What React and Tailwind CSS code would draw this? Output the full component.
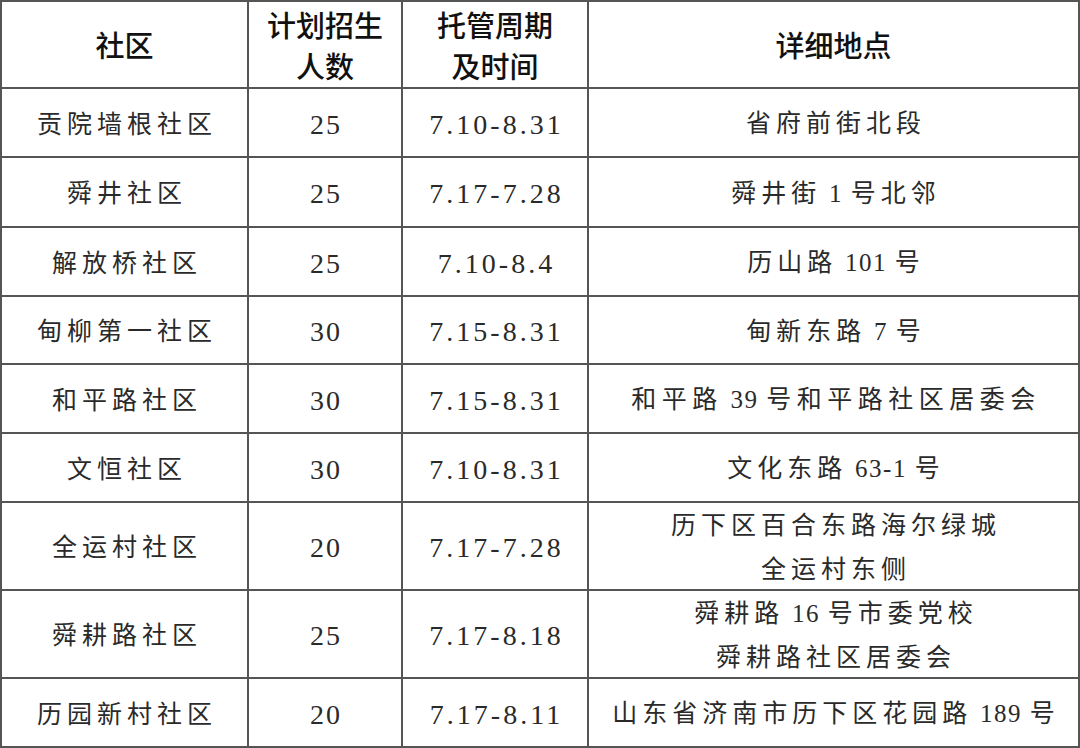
import React from "react";

const rows = [
  { name: "贡院墙根社区", count: "25", period: "7.10-8.31", place: ["省府前街北段"], h: "h-[69px]" },
  { name: "舜井社区", count: "25", period: "7.17-7.28", place: ["舜井街 1 号北邻"], h: "h-[70px]" },
  { name: "解放桥社区", count: "25", period: "7.10-8.4", place: ["历山路 101 号"], h: "h-[69px]" },
  { name: "甸柳第一社区", count: "30", period: "7.15-8.31", place: ["甸新东路 7 号"], h: "h-[68px]" },
  { name: "和平路社区", count: "30", period: "7.15-8.31", place: ["和平路 39 号和平路社区居委会"], h: "h-[69px]", wide: true },
  { name: "文恒社区", count: "30", period: "7.10-8.31", place: ["文化东路 63-1 号"], h: "h-[69px]" },
  { name: "全运村社区", count: "20", period: "7.17-7.28", place: ["历下区百合东路海尔绿城", "全运村东侧"], h: "h-[88px]" },
  { name: "舜耕路社区", count: "25", period: "7.17-8.18", place: ["舜耕路 16 号市委党校", "舜耕路社区居委会"], h: "h-[88px]" },
  { name: "历园新村社区", count: "20", period: "7.17-8.11", place: ["山东省济南市历下区花园路 189 号"], h: "h-[69px]" },
];

const bodyFont = "font-[Liberation_Serif,Noto_Sans_CJK_SC,serif] text-[#2a2a2a]";
const headFont = "font-[Noto_Sans_CJK_SC,sans-serif] text-[29px] text-[#111] font-medium leading-[41px]";

const Cell = ({ children, className = "" }) => (
  <div className={`flex flex-col items-center justify-center text-center border-r-2 border-b-2 border-[#555] ${className}`}>
    {children}
  </div>
);

// numbers inside addresses sit tighter than the Chinese characters
const Address = ({ text }) => (
  <span>
    {text.split(/([0-9\- ]+)/).map((part, i) =>
      /[0-9]/.test(part) ? (
        <span key={i} className="tracking-[1.5px]">
          {part}
        </span>
      ) : (
        <span key={i}>{part}</span>
      )
    )}
  </span>
);

const App = () => {
  return (
    <div className="w-[1080px] h-[748px] bg-white overflow-hidden">
      <div className="grid grid-cols-[247px_154px_186px_491px] border-t-2 border-l-2 border-[#555] w-[1080px]">
        {/* header */}
        <Cell className={`h-[87px] ${headFont}`}>社区</Cell>
        <Cell className={`h-[87px] ${headFont}`}>
          <span>计划招生</span>
          <span>人数</span>
        </Cell>
        <Cell className={`h-[87px] ${headFont}`}>
          <span>托管周期</span>
          <span>及时间</span>
        </Cell>
        <Cell className={`h-[87px] ${headFont}`}>详细地点</Cell>

        {rows.map((r) => (
          <React.Fragment key={r.name}>
            <Cell className={`${r.h} ${bodyFont} text-[25px] tracking-[5px] pl-[5px] pt-[4px]`}>{r.name}</Cell>
            <Cell className={`${r.h} ${bodyFont} text-[28px] tracking-[2px] pl-[2px] pt-[4px]`}>{r.count}</Cell>
            <Cell className={`${r.h} ${bodyFont} text-[28px] tracking-[3px] pl-[3px] pt-[4px]`}>{r.period}</Cell>
            <Cell
              className={`${r.h} ${bodyFont} text-[25px] ${r.wide ? "tracking-[5.5px]" : "tracking-[5px]"} leading-[44px] pl-[5px] pt-[3px]`}
            >
              {r.place.map((p) => (
                <Address key={p} text={p} />
              ))}
            </Cell>
          </React.Fragment>
        ))}
      </div>
    </div>
  );
};

export default App;
